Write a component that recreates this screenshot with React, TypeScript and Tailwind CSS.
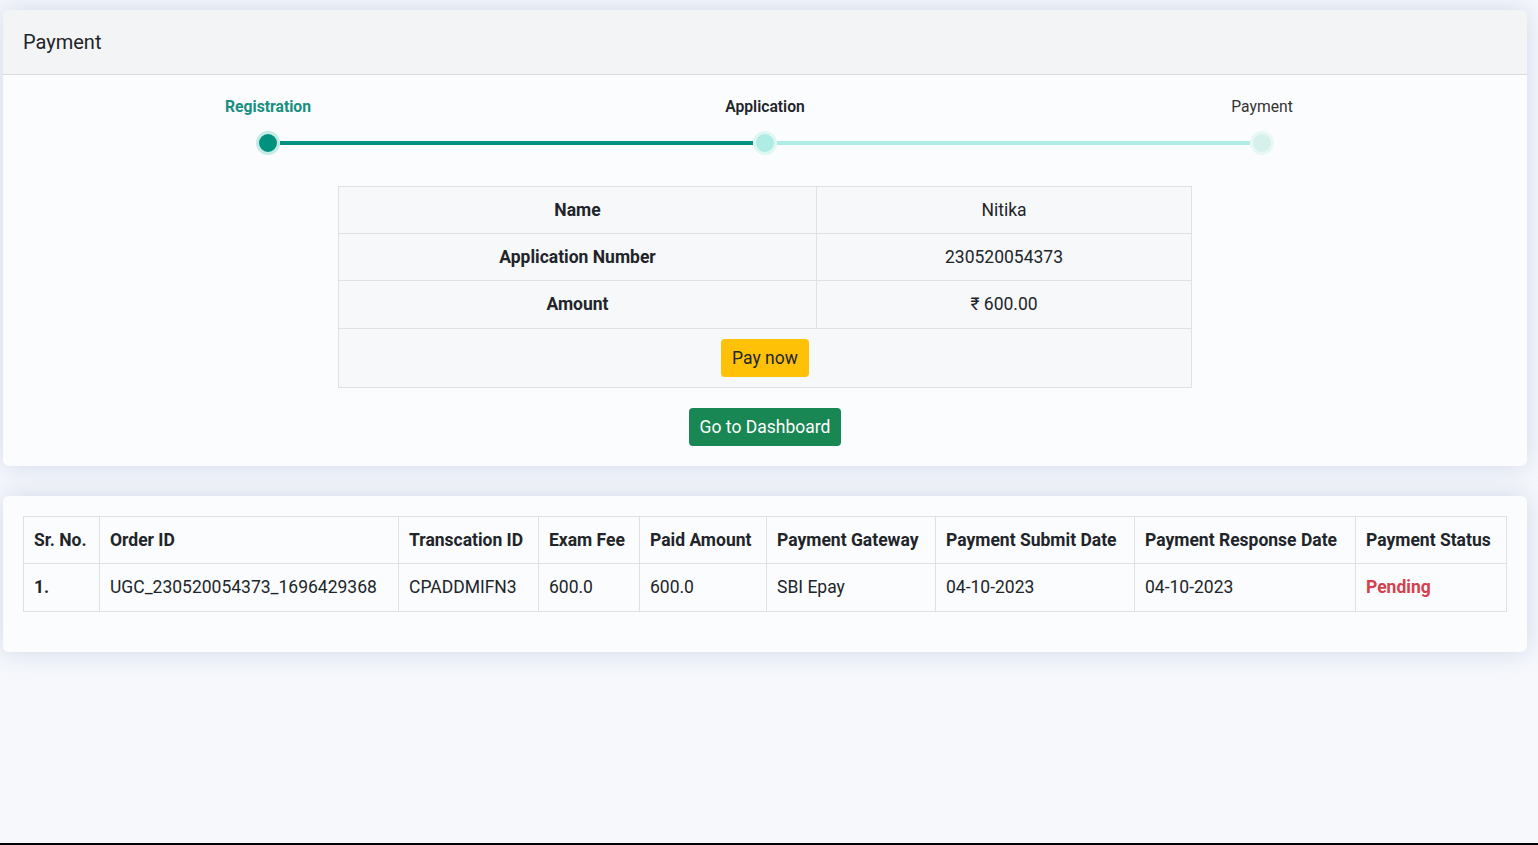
const steps = [
  { label: 'Registration', cls: 'text-[#168f7f] font-bold' },
  { label: 'Application', cls: 'text-[#212529] font-semibold' },
  { label: 'Payment', cls: 'text-[#333] font-normal' },
];

const summary = [
  { label: 'Name', value: 'Nitika', h: 'h-[47px]' },
  { label: 'Application Number', value: '230520054373', h: 'h-[47px]' },
  { label: 'Amount', value: '₹ 600.00', h: 'h-[48px]' },
];

const columns = [
  { title: 'Sr. No.', w: 'w-[76px]' },
  { title: 'Order ID', w: 'w-[299px]' },
  { title: 'Transcation ID', w: 'w-[140px]' },
  { title: 'Exam Fee', w: 'w-[101px]' },
  { title: 'Paid Amount', w: 'w-[127px]' },
  { title: 'Payment Gateway', w: 'w-[169px]' },
  { title: 'Payment Submit Date', w: 'w-[199px]' },
  { title: 'Payment Response Date', w: 'w-[221px]' },
  { title: 'Payment Status', w: 'w-[151px]' },
];

const row = ['UGC_230520054373_1696429368', 'CPADDMIFN3', '600.0', '600.0', 'SBI Epay', '04-10-2023', '04-10-2023'];

function Dot({ fill, ring }: { fill: string; ring: string }) {
  return <div className={`h-[24px] w-[24px] shrink-0 rounded-full border-[3px] ${fill} ${ring}`} />;
}

export default function App() {
  return (
    <div className="min-h-[845px] bg-[#f6f8fc] font-['Roboto',sans-serif] text-[#212529] border-b-2 border-black">
      <div className="px-[3px] pt-[10px] pr-[11px]">
        {/* Payment card */}
        <div className="bg-[#fbfcfe] rounded-[6px] shadow-[0_0_24px_rgba(160,176,210,0.45)] overflow-hidden">
          <div className="h-[65px] bg-[#f3f4f6] border-b border-[#d9dbe0] flex items-center px-[20px]">
            <h5 className="text-[20px] text-[#212529]">Payment</h5>
          </div>

          <div className="pt-[20px] pb-[20px]">
            {/* Stepper */}
            <div className="w-[1491px] mx-auto grid grid-cols-3 text-[15.7px] leading-[24px]">
              {steps.map(s => (
                <div key={s.label} className={`text-center ${s.cls}`}>{s.label}</div>
              ))}
            </div>
            <div className="mx-auto w-[1018px] mt-[12px] flex items-center">
              <Dot fill="bg-[#00917f]" ring="border-[#c4ebe6]" />
              <div className="flex-1 h-[4px] bg-[#00917f]" />
              <Dot fill="bg-[#aeece4]" ring="border-[#ddf7f3]" />
              <div className="flex-1 h-[4px] bg-[#aeece4]" />
              <Dot fill="bg-[#d6f0ec]" ring="border-[#e8f8f5]" />
            </div>

            {/* Summary table */}
            <table className="mx-auto mt-[31px] w-[854px] border-collapse text-[17.5px]">
              <tbody>
                {summary.map(r => (
                  <tr key={r.label} className={r.h}>
                    <th className="w-[478px] border border-[#dee2e6] bg-[#f7f8fa] font-bold text-center">{r.label}</th>
                    <td className="border border-[#dee2e6] bg-[#f7f8fa] text-center">{r.value}</td>
                  </tr>
                ))}
                <tr className="h-[59px]">
                  <td colSpan={2} className="border border-[#dee2e6] bg-[#f7f8fa] text-center">
                    <button className="bg-[#ffc107] text-[#212529] rounded-[4px] px-[11px] h-[38px] text-[17.5px]">Pay now</button>
                  </td>
                </tr>
              </tbody>
            </table>

            <div className="flex justify-center mt-[20px]">
              <button className="bg-[#198754] text-white rounded-[4px] px-[11px] h-[38px] text-[17.5px]">Go to Dashboard</button>
            </div>
          </div>
        </div>

        {/* Transactions card */}
        <div className="mt-[30px] bg-[#fbfcfe] rounded-[6px] shadow-[0_0_24px_rgba(160,176,210,0.45)] px-[20px] pt-[20px] pb-[40px]">
          <table className="w-full border-collapse text-[17.5px] text-left">
            <thead>
              <tr className="h-[47px]">
                {columns.map(c => (
                  <th key={c.title} className={`${c.w} border border-[#dee2e6] px-[10px] font-bold whitespace-nowrap`}>{c.title}</th>
                ))}
              </tr>
            </thead>
            <tbody>
              <tr className="h-[48px]">
                <td className="border border-[#dee2e6] px-[10px] font-bold">1.</td>
                {row.map((v, i) => (
                  <td key={i} className="border border-[#dee2e6] px-[10px] whitespace-nowrap">{v}</td>
                ))}
                <td className="border border-[#dee2e6] px-[10px] font-bold text-[#d63f4c]">Pending</td>
              </tr>
            </tbody>
          </table>
        </div>
      </div>
    </div>
  );
}
